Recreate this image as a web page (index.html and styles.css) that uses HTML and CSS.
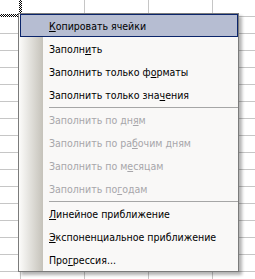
FILE: index.html
```html
<!DOCTYPE html>
<html lang="ru">
<head>
  <meta charset="UTF-8" />
  <title>Автозаполнение</title>
  <link rel="stylesheet" href="styles.css">
</head>
<body>
  <div class="menu">
    <div class="item active"><u>К</u>опировать ячейки</div>
    <div class="item">Заполн<u>и</u>ть</div>
    <div class="item">Заполнить только ф<u>о</u>рматы</div>
    <div class="item">Заполнить только зна<u>ч</u>ения</div>
    <div class="sep"></div>
    <div class="item off">Заполнить по дн<u>я</u>м</div>
    <div class="item off">Заполнить по ра<u>б</u>очим дням</div>
    <div class="item off">Заполнить по м<u>е</u>сяцам</div>
    <div class="item off">Заполнить по <u>г</u>одам</div>
    <div class="sep"></div>
    <div class="item"><u>Л</u>инейное приближение</div>
    <div class="item"><u>Э</u>кспоненциальное приближение</div>
    <div class="item">Про<u>г</u>рессия...</div>
  </div>
</body>
</html>
```

FILE: styles.css
```css
html, body {
  margin: 0;
  height: 279px;
}

body {
  position: relative;
  padding: 13px 0 0 18px;
  box-sizing: border-box;
  font-family: "DejaVu Sans Condensed", "DejaVu Sans", Tahoma, sans-serif;
  font-size: 10.5px;
  background-color: #fff;
  background-image:
    repeating-linear-gradient(to bottom, transparent 0 16px, #c6c6c6 16px 17px),
    repeating-linear-gradient(to right, transparent 0 20px, #c6c6c6 20px 21px, transparent 21px 64px);
}

/* рамка копирования */
body::before,
body::after {
  content: "";
  position: absolute;
  background: repeating-conic-gradient(#000 0 25%, #fff 0 50%) 0 0 / 2px 2px;
}

body::before {
  left: 19px;
  top: 0;
  width: 3px;
  height: 17px;
}

body::after {
  left: 0;
  top: 14px;
  width: 22px;
  height: 3px;
}

.menu {
  position: relative;
  z-index: 1;
  width: 221px;
  box-sizing: border-box;
  border: 1px solid #7b7b7b;
  background:
    linear-gradient(to right, #fcfcfa, #c5c2ba) 0 0 / 24px 100% no-repeat,
    #f9f8f7;
  box-shadow: 3px 3px 3px rgba(0, 0, 0, 0.3);
}

.item {
  height: 23px;
  display: flex;
  align-items: center;
  padding-left: 30px;
  color: #000;
  white-space: nowrap;
}

.item.active {
  margin-left: 1px;
  padding-left: 28px;
  border: 1px solid #0a246a;
  background: #b6bdd2;
  box-sizing: border-box;
}

.item.off {
  color: #a7a6aa;
}

.sep {
  height: 2px;
  margin-left: 30px;
  display: flex;
  align-items: center;
}

.sep::before {
  content: "";
  flex: 1;
  height: 1px;
  background: #a6a6a6;
}
```
